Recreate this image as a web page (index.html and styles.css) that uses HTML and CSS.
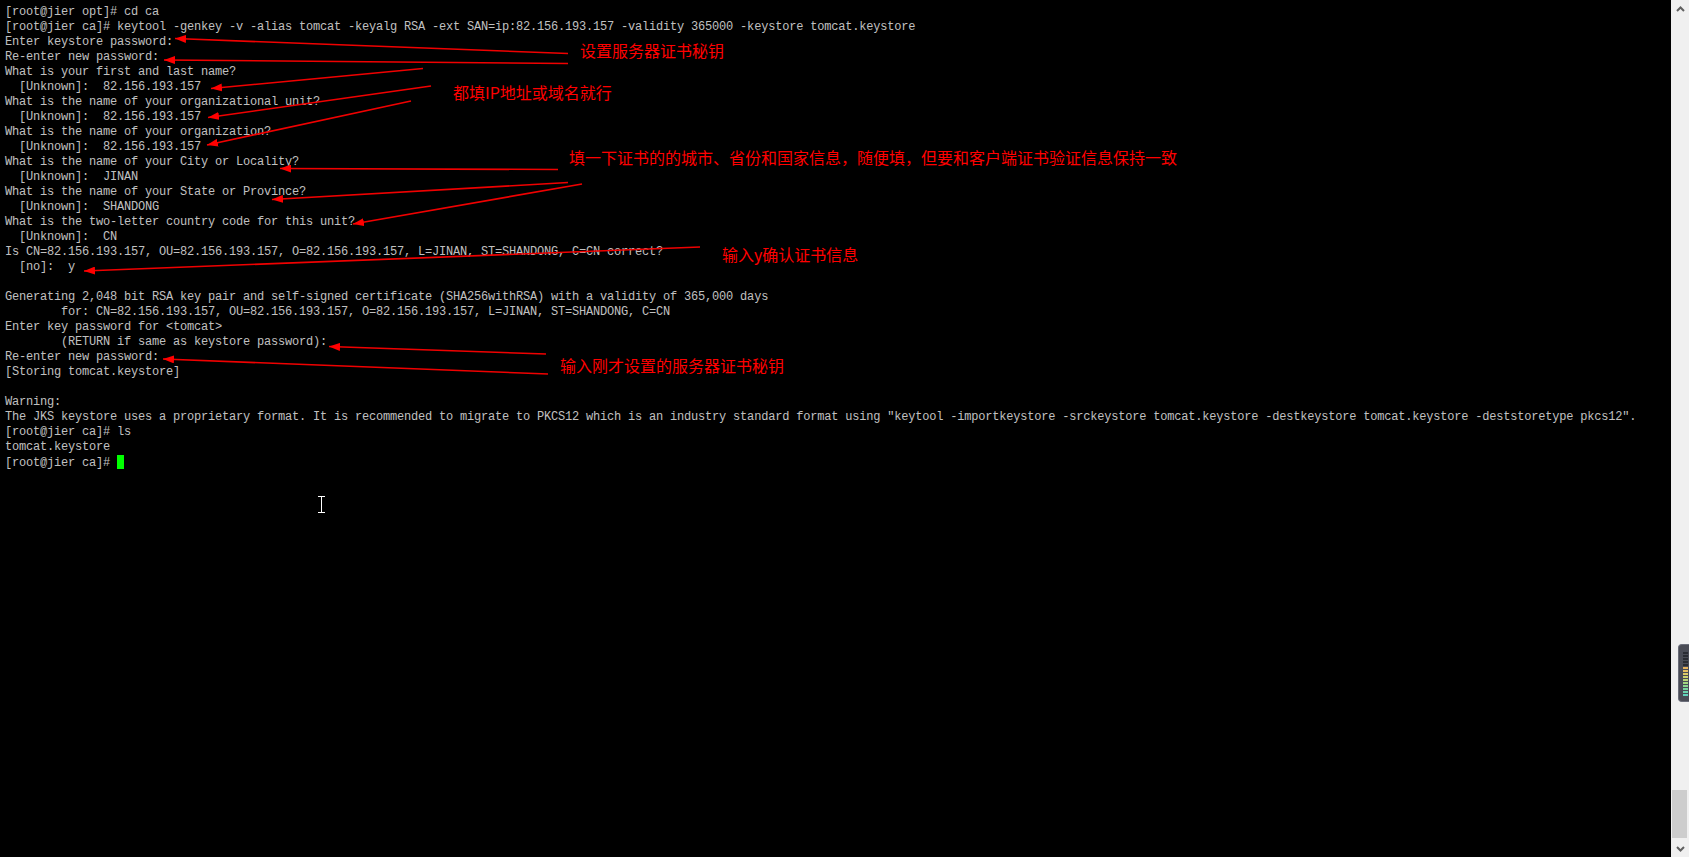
FILE: index.html
```html
<!DOCTYPE html>
<html>
<head>
    <title>Xshell - keytool</title>
    <link rel="stylesheet" href="styles.css">
</head>
<body>
    <div class="window">
        <div class="terminal">
            <div class="screen">
                <div class="ln">[root@jier opt]# cd ca</div>
                <div class="ln">[root@jier ca]# keytool -genkey -v -alias tomcat -keyalg RSA -ext SAN=ip:82.156.193.157 -validity 365000 -keystore tomcat.keystore</div>
                <div class="ln">Enter keystore password:</div>
                <div class="ln">Re-enter new password:</div>
                <div class="ln">What is your first and last name?</div>
                <div class="ln">  [Unknown]:  82.156.193.157</div>
                <div class="ln">What is the name of your organizational unit?</div>
                <div class="ln">  [Unknown]:  82.156.193.157</div>
                <div class="ln">What is the name of your organization?</div>
                <div class="ln">  [Unknown]:  82.156.193.157</div>
                <div class="ln">What is the name of your City or Locality?</div>
                <div class="ln">  [Unknown]:  JINAN</div>
                <div class="ln">What is the name of your State or Province?</div>
                <div class="ln">  [Unknown]:  SHANDONG</div>
                <div class="ln">What is the two-letter country code for this unit?</div>
                <div class="ln">  [Unknown]:  CN</div>
                <div class="ln">Is CN=82.156.193.157, OU=82.156.193.157, O=82.156.193.157, L=JINAN, ST=SHANDONG, C=CN correct?</div>
                <div class="ln">  [no]:  y</div>
                <div class="ln empty"></div>
                <div class="ln">Generating 2,048 bit RSA key pair and self-signed certificate (SHA256withRSA) with a validity of 365,000 days</div>
                <div class="ln">        for: CN=82.156.193.157, OU=82.156.193.157, O=82.156.193.157, L=JINAN, ST=SHANDONG, C=CN</div>
                <div class="ln">Enter key password for &lt;tomcat&gt;</div>
                <div class="ln">        (RETURN if same as keystore password):</div>
                <div class="ln">Re-enter new password:</div>
                <div class="ln">[Storing tomcat.keystore]</div>
                <div class="ln empty"></div>
                <div class="ln">Warning:</div>
                <div class="ln">The JKS keystore uses a proprietary format. It is recommended to migrate to PKCS12 which is an industry standard format using "keytool -importkeystore -srckeystore tomcat.keystore -destkeystore tomcat.keystore -deststoretype pkcs12".</div>
                <div class="ln">[root@jier ca]# ls</div>
                <div class="ln">tomcat.keystore</div>
                <div class="ln">[root@jier ca]# <span class="cursor"></span></div>
            </div>

            <!-- annotations drawn on top of the screenshot -->
            <div class="note note-key">设置服务器证书秘钥</div>
            <div class="note note-ip">都填IP地址或域名就行</div>
            <div class="note note-city">填一下证书的的城市、省份和国家信息，随便填，但要和客户端证书验证信息保持一致</div>
            <div class="note note-yes">输入y确认证书信息</div>
            <div class="note note-again">输入刚才设置的服务器证书秘钥</div>

            <svg class="arrows" width="1671" height="857" viewBox="0 0 1671 857">
                <defs>
                    <marker id="head" markerUnits="userSpaceOnUse" markerWidth="11" markerHeight="8" refX="11" refY="4" orient="auto">
                        <path d="M0,0 L11,4 L0,8 z" fill="#ff0000"/>
                    </marker>
                </defs>
                <g stroke="#f00000" stroke-width="1.6" fill="none" marker-end="url(#head)">
                    <path d="M568,53.5 L175,38.5"/>
                    <path d="M568,63.5 L164,60"/>
                    <path d="M423,68.5 L211,88.5"/>
                    <path d="M431,86 L208,117.5"/>
                    <path d="M411,101 L207,145"/>
                    <path d="M558,169.5 L280,168.5"/>
                    <path d="M568,182.5 L272,199.5"/>
                    <path d="M582,184 L353,224"/>
                    <path d="M700,247 L84,271"/>
                    <path d="M546,354 L329,346.5"/>
                    <path d="M548,374 L163,359"/>
                </g>
            </svg>

            <svg class="ibeam" width="7" height="17" viewBox="0 0 7 17">
                <path d="M0,0.5 H7 M3.5,0.5 V16.5 M0,16.5 H7" stroke="#ffffff" stroke-width="1" fill="none"/>
            </svg>
        </div>

        <div class="scrollbar">
            <div class="sb-button">
                <svg width="9" height="6" viewBox="0 0 9 6"><path d="M1,5 L4.5,1.5 L8,5" stroke="#606060" stroke-width="2" fill="none"/></svg>
            </div>
            <div class="sb-track">
                <div class="sb-thumb"></div>
            </div>
            <div class="sb-button">
                <svg width="9" height="6" viewBox="0 0 9 6"><path d="M1,1 L4.5,4.5 L8,1" stroke="#606060" stroke-width="2" fill="none"/></svg>
            </div>

            <div class="meter">
                <span class="bar off"></span>
                <span class="bar off"></span>
                <span class="bar off"></span>
                <span class="bar off"></span>
                <span class="bar off"></span>
                <span class="bar c1"></span>
                <span class="bar c2"></span>
                <span class="bar c3"></span>
                <span class="bar c4"></span>
                <span class="bar c5"></span>
                <span class="bar c6"></span>
                <span class="bar c7"></span>
                <span class="bar c8"></span>
                <span class="bar c9"></span>
                <span class="bar c10"></span>
            </div>
        </div>
    </div>
</body>
</html>
```

FILE: styles.css
```css
html, body {
    margin: 0;
    padding: 0;
    background-color: #000;
    overflow: hidden;
}
.window {
    display: flex;
    width: 1689px;
    height: 857px;
}
.terminal {
    flex: 1;
    position: relative;
    overflow: hidden;
}
.screen {
    padding: 5px 0 0 5px;
    font-family: "Liberation Mono", monospace;
    font-size: 12px;
    line-height: 15px;
    letter-spacing: -0.2px;
    color: #c0c0c0;
}
.ln {
    width: fit-content;
    height: 15px;
    white-space: pre;
}
.cursor {
    display: inline-block;
    width: 7px;
    height: 14px;
    background-color: #00ff00;
    vertical-align: -3px;
}
.note {
    position: absolute;
    font-family: "Noto Sans CJK SC", sans-serif;
    font-size: 16px;
    line-height: 16px;
    color: #ff0000;
    white-space: nowrap;
}
.note-key {
    left: 580px;
    top: 42px;
}
.note-ip {
    left: 453px;
    top: 84px;
}
.note-city {
    left: 569px;
    top: 149px;
}
.note-yes {
    left: 722px;
    top: 246px;
}
.note-again {
    left: 560px;
    top: 357px;
}
.arrows {
    position: absolute;
    left: 0;
    top: 0;
    pointer-events: none;
}
.ibeam {
    position: absolute;
    left: 318px;
    top: 496px;
}
.scrollbar {
    position: relative;
    width: 18px;
    display: flex;
    flex-direction: column;
    background-color: #f0f0f0;
}
.sb-button {
    height: 17px;
    display: flex;
    align-items: center;
    justify-content: center;
}
.sb-track {
    flex: 1;
    display: flex;
    flex-direction: column;
    justify-content: flex-end;
    padding: 0 2px 2px 1px;
}
.sb-thumb {
    height: 48px;
    background-color: #cdcdcd;
}
.meter {
    position: absolute;
    left: 7px;
    top: 644px;
    width: 11px;
    height: 58px;
    box-sizing: border-box;
    padding: 7px 0 0 4px;
    background-color: #4a4c56;
    border: 1px solid #6b6e7a;
    border-right: none;
    border-radius: 4px 0 0 4px;
    display: flex;
    flex-direction: column;
    gap: 1px;
}
.bar {
    display: block;
    width: 5px;
    height: 2px;
}
.bar.off { background-color: #2a2c33; }
.bar.c1 { background-color: #e6b25c; }
.bar.c2 { background-color: #e4c062; }
.bar.c3 { background-color: #dccb68; }
.bar.c4 { background-color: #cdd26e; }
.bar.c5 { background-color: #b9d676; }
.bar.c6 { background-color: #a2d880; }
.bar.c7 { background-color: #8cd88e; }
.bar.c8 { background-color: #7ad79e; }
.bar.c9 { background-color: #6cd5ae; }
.bar.c10 { background-color: #62d2bc; }
```
